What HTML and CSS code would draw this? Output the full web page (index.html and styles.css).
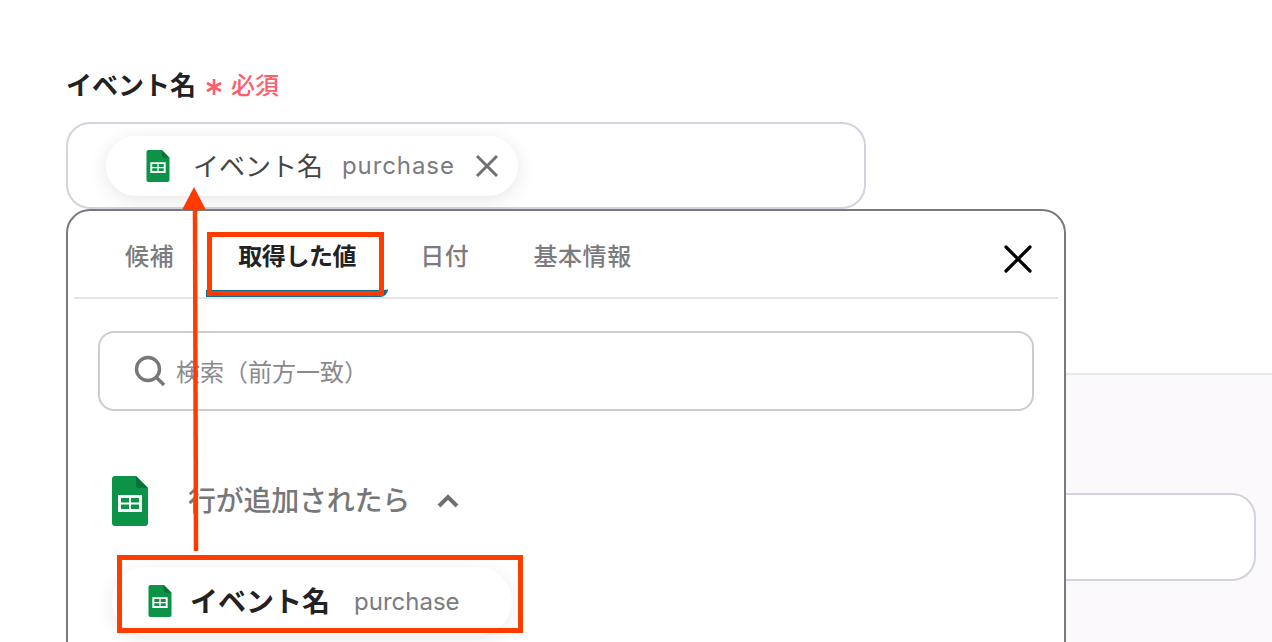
FILE: index.html
```html
<!DOCTYPE html>
<html>
<head>
  <title>イベント名</title>
  <link rel="stylesheet" href="styles.css">
</head>
<body>
  <svg width="0" height="0" class="defs">
    <symbol id="sheets" viewBox="0 0 36 50">
      <path d="M3 0H24L36 12V47a3 3 0 0 1-3 3H3a3 3 0 0 1-3-3V3a3 3 0 0 1 3-3Z" fill="#0c9347"/>
      <path d="M24 0L36 12H27a3 3 0 0 1-3-3Z" fill="#0a7238"/>
      <path d="M6 19H30V36H6ZM9 22V26.5H17V22ZM19 22V26.5H27V22ZM9 28.500V33H17V28.500ZM19 28.500V33H27V28.500Z" fill="#fff" fill-rule="evenodd"/>
    </symbol>
  </svg>

  <div class="page">
    <div class="label-row">
      <span class="label">イベント名</span>
      <svg class="star" viewBox="0 0 18 18"><path d="M9 1V17M2 5L16 13M16 5L2 13"/></svg>
      <span class="required">必須</span>
    </div>
    <div class="field">
      <div class="chip">
        <svg class="chip-icon"><use href="#sheets"/></svg>
        <span class="chip-name">イベント名</span>
        <span class="chip-value">purchase</span>
        <svg class="chip-close" viewBox="0 0 24 24"><path d="M2 2L22 22M22 2L2 22"/></svg>
      </div>
    </div>

    <div class="lower">
      <div class="lower-input"></div>
    </div>

    <div class="panel">
      <div class="tabs">
        <div class="tab">候補</div>
        <div class="tab active">取得した値</div>
        <div class="tab">日付</div>
        <div class="tab">基本情報</div>
        <svg class="panel-close" viewBox="0 0 28 28"><path d="M2 2L26 26M26 2L2 26"/></svg>
      </div>
      <div class="search">
        <svg class="search-icon" viewBox="0 0 32 32"><circle cx="14" cy="14" r="11.5"/><path d="M22.5 22.5L30 30"/></svg>
        <span class="search-text">検索（前方一致）</span>
      </div>
      <div class="group">
        <svg class="group-icon"><use href="#sheets"/></svg>
        <span class="group-name">行が追加されたら</span>
        <svg class="group-toggle" viewBox="0 0 22 14"><path d="M2 12L11 3L20 12"/></svg>
      </div>
      <div class="item">
        <svg class="item-icon"><use href="#sheets"/></svg>
        <span class="item-name">イベント名</span>
        <span class="item-value">purchase</span>
      </div>
    </div>

    <div class="mark mark-tab"></div>
    <div class="mark mark-item"></div>
    <svg class="arrow" width="24" height="364" viewBox="0 0 24 364">
      <path d="M12 0L24 23H0Z" fill="#ff3b00"/>
      <path d="M13 21L14 364" stroke="#ff3b00" stroke-width="4.500" fill="none"/>
    </svg>
  </div>
</body>
</html>
```

FILE: styles.css
```css
* {
  box-sizing: border-box;
}

body {
  font-family: "Inter", "Noto Sans CJK JP", sans-serif;
  background-color: #fff;
  color: #222;
  margin: 0;
}

.defs {
  display: block;
  height: 0;
}

.page {
  position: relative;
  width: 1272px;
  height: 642px;
  overflow: hidden;
  padding-top: 64px;
}

.label-row {
  display: flex;
  align-items: center;
  height: 38px;
  padding-left: 66px;
}

.label {
  font-size: 26px;
  font-weight: 700;
  color: #222;
}

.star {
  width: 18px;
  height: 18px;
  margin: 7px 8px 0 9px;
}

.star path {
  stroke: #ff5c6c;
  stroke-width: 2.6;
  fill: none;
}

.required {
  font-size: 24px;
  font-weight: 500;
  color: #ff5c6c;
}

.field {
  display: flex;
  align-items: center;
  width: 800px;
  height: 87px;
  margin: 20px 0 0 66px;
  padding-left: 38px;
  border: 2px solid #d2d3df;
  border-radius: 24px;
}

.chip {
  display: flex;
  align-items: center;
  width: 412px;
  height: 60px;
  padding-left: 40px;
  border-radius: 30px;
  background-color: #fff;
  box-shadow: 0 4px 18px rgba(60, 60, 90, 0.12);
}

.chip-icon {
  width: 24px;
  height: 32px;
  margin-right: 23px;
}

.chip-name {
  font-size: 26px;
  color: #444;
  margin-right: 19px;
  padding-bottom: 3px;
}

.chip-value {
  font-size: 24px;
  color: #7b7b80;
  letter-spacing: 0.9px;
  margin-right: 20px;
}

.chip-close {
  width: 24px;
  height: 24px;
}

.chip-close path {
  stroke: #707074;
  stroke-width: 3;
  fill: none;
}

.lower {
  height: 269px;
  margin: 164px 0 0 66px;
  padding: 118px 16px 0 0;
  border-top: 2px solid #e8e8ec;
  background-color: #fbf9fc;
}

.lower-input {
  width: 700px;
  height: 88px;
  margin-left: auto;
  border: 2px solid #d2d3df;
  border-radius: 24px;
  background-color: #fff;
}

.panel {
  position: absolute;
  left: 66px;
  top: 209px;
  width: 1000px;
  height: 460px;
  border: 2px solid #7a7a7e;
  border-radius: 24px;
  background-color: #fff;
}

.tabs {
  position: relative;
  display: flex;
  height: 88px;
  margin: 0 6px;
  padding-left: 19px;
  border-bottom: 2px solid #e4e4ea;
}

.tab {
  height: 86px;
  padding: 26px 32px 0;
  font-size: 24px;
  font-weight: 500;
  letter-spacing: 0.6px;
  color: #7c7c7f;
}

.tab.active {
  font-weight: 700;
  letter-spacing: -0.4px;
  color: #222;
  border-bottom: 7px solid #0f6a8f;
  border-bottom-right-radius: 8px;
}

.panel-close {
  position: absolute;
  right: 26px;
  top: 34px;
  width: 28px;
  height: 28px;
}

.panel-close path {
  stroke: #000;
  stroke-width: 3.2;
  stroke-linecap: round;
  fill: none;
}

.search {
  display: flex;
  align-items: center;
  width: 936px;
  height: 80px;
  margin: 32px 0 0 30px;
  padding-left: 34px;
  border: 2px solid #ccccd0;
  border-radius: 16px;
}

.search-icon {
  width: 32px;
  height: 32px;
  margin-right: 10px;
}

.search-icon circle,
.search-icon path {
  stroke: #77777a;
  stroke-width: 3.4;
  fill: none;
}

.search-text {
  font-size: 24px;
  color: #8a8a8e;
  padding-bottom: 2px;
}

.group {
  display: flex;
  align-items: center;
  height: 50px;
  margin: 65px 0 0 44px;
}

.group-icon {
  width: 36px;
  height: 50px;
  margin-right: 40px;
}

.group-name {
  font-size: 28px;
  font-weight: 500;
  letter-spacing: -0.25px;
  color: #77777a;
  margin-right: 27px;
  padding-bottom: 4px;
}

.group-toggle {
  width: 22px;
  height: 14px;
}

.group-toggle path {
  stroke: #707074;
  stroke-width: 4;
  fill: none;
}

.item {
  display: flex;
  align-items: center;
  width: 400px;
  height: 68px;
  margin: 41px 0 0 44px;
  padding-left: 36px;
  border-radius: 34px;
  background-color: #fff;
  box-shadow: 0 4px 18px rgba(60, 60, 90, 0.1);
}

.item-icon {
  width: 24px;
  height: 32px;
  margin-right: 18px;
}

.item-name {
  font-size: 28px;
  font-weight: 700;
  color: #222;
  margin-right: 24px;
  padding-bottom: 2px;
}

.item-value {
  font-size: 24px;
  color: #7b7b80;
}

.mark {
  position: absolute;
  border: 5px solid #ff3b00;
}

.mark-tab {
  left: 207px;
  top: 232px;
  width: 177px;
  height: 64px;
}

.mark-item {
  left: 117px;
  top: 555px;
  width: 406px;
  height: 78px;
}

.arrow {
  position: absolute;
  left: 182px;
  top: 187px;
}
```
